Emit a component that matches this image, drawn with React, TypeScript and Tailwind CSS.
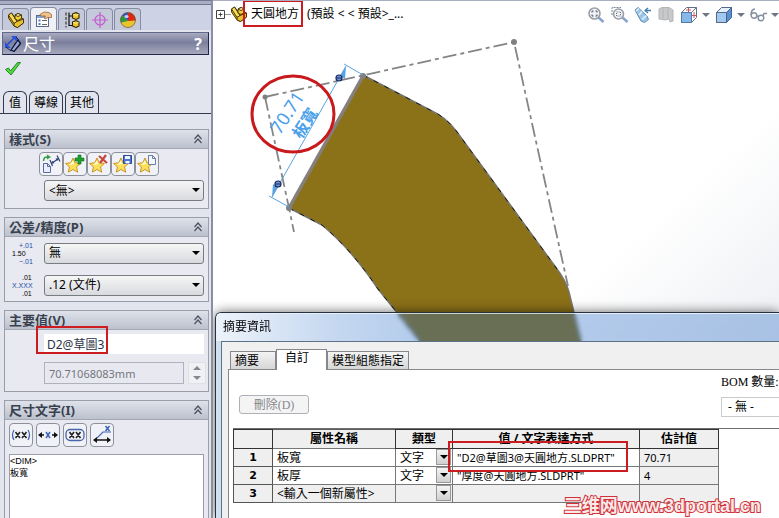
import { ReactNode } from 'react';
import { clsx } from 'clsx';

type Row = {
  id: number;
  name: string;
  type: string;
  value: string;
  result: string;
};

const rows: Row[] = [
  { id: 1, name: '板寬', type: '文字', value: '"D2@草圖3@天圓地方.SLDPRT"', result: '70.71' },
  { id: 2, name: '板厚', type: '文字', value: '"厚度@天圓地方.SLDPRT"', result: '4' },
  { id: 3, name: '<輸入一個新屬性>', type: '', value: '', result: '' },
];

function PartIcon() {
  return (
    <svg className="h-4 w-4 shrink-0" viewBox="0 0 16 16" stroke="#3c2e06" strokeWidth="0.9" strokeLinejoin="round">
      <path d="M0.500 3l3-2 4 5 3-2 5 3v4l-6 4.500-3.500-1.500L0.500 6z" fill="#d9a818" />
      <path d="M0.500 3l3-2 5.500 8.500-3 2z" fill="#f7dc58" />
      <path d="M6 11.500l3-2 6.500-2.500v4l-6 4.500L6 14z" fill="#e9c030" />
      <path d="M7 3l3-1.500L13.500 3v3.500L10 8.500 7 7z" fill="#f2cf3c" />
      <path d="M7 3l3 1.500L13.500 3 10 1.500z" fill="#fff0a0" />
    </svg>
  );
}

function PropertyIcon() {
  return (
    <svg className="h-4 w-4" viewBox="0 0 16 16">
      <rect x="0.500" y="4.500" width="12" height="11" fill="#fff" stroke="#5a6a90" />
      <path d="M1 5h11v2H1z" fill="#8ba3d6" />
      <path d="M2.500 8.500h2v2h-2zM2.500 12h2v2h-2z" fill="#5879b8" />
      <path d="M6 9.500h5M6 13.500h5" stroke="#666" />
      <path d="M4 3.500L8 1l5 .5 2.500 2v3l-3.500 0-3 1.500-1-1 1.500-2-5 0z" fill="#f0c38c" stroke="#8a5a28" strokeWidth="0.7" />
    </svg>
  );
}

function ConfigIcon() {
  return (
    <svg className="h-4 w-4" viewBox="0 0 16 16">
      <path d="M2 0.500v15" stroke="#555" strokeWidth="1.500" strokeDasharray="3 1.500" />
      <path d="M5 0.500v13h4M5 4h4" stroke="#111" strokeWidth="1.200" fill="none" />
      <path d="M8.500 2l3.500-1.500L15 2v4l-3 1.500L8.500 6zM8.500 10L12 8.500 15 10v4l-3 1.500L8.500 14z" fill="#efc42c" stroke="#2e2406" strokeWidth="1.100" />
      <path d="M9 2.500l3 0.800L14.500 2.500M9 10.500l3 0.800 2.500-.8" stroke="#fff09a" strokeWidth="0.900" fill="none" />
    </svg>
  );
}

function TargetIcon() {
  return (
    <svg className="h-4 w-4" viewBox="0 0 16 16" fill="none" stroke="#c35ccf" strokeWidth="1.200">
      <circle cx="8" cy="8" r="5" />
      <path d="M8 0v16M0 8h16" />
    </svg>
  );
}

function AppearanceIcon() {
  return (
    <svg className="h-4 w-4" viewBox="0 0 16 16">
      <circle cx="8" cy="8" r="7.500" fill="#e8c52c" />
      <path d="M8 9L2 3.500A7.500 7.500 0 0 1 8 .5z" fill="#3a54c0" />
      <path d="M8 9V.5a7.500 7.500 0 0 1 7.500 8z" fill="#da2818" />
      <path d="M8 9L2 3.500a7.500 7.500 0 0 0-1 7z" fill="#30963c" />
      <circle cx="8" cy="8" r="7.500" fill="none" stroke="#5a4620" strokeWidth="0.6" />
      <ellipse cx="6.500" cy="4.500" rx="2" ry="1.600" fill="#fff" opacity="0.75" />
    </svg>
  );
}

function DimensionIcon() {
  return (
    <svg className="h-4 w-4 shrink-0" viewBox="0 0 16 16">
      <path d="M6 14l7-10 2.500 3.500L9 15.500z" fill="#9aa6d6" stroke="#0c1238" strokeWidth="1.300" />
      <path d="M2 9l7-7" stroke="#1c48d8" strokeWidth="1.500" />
      <path d="M0 6v6h6zM6 0h6v6z" fill="#2a54dc" />
      <path d="M1 11l5 4M11 1l3 3" stroke="#1a2460" />
    </svg>
  );
}

function CheckMark() {
  return (
    <svg className="h-4 w-4" viewBox="0 0 16 16">
      <path d="M0.500 8.500L3.500 7l2 3 7-8.500 3 0L6 14z" fill="#4fdc3e" stroke="#1a7a1c" strokeWidth="0.9" strokeLinejoin="round" />
    </svg>
  );
}

function Star({ children }: { children?: ReactNode }) {
  return (
    <svg className="h-5 w-5" viewBox="0 0 20 20">
      <path
        d="M8 4l2.200 4.800 5.300.6-4 3.500 1.200 5.300L8 15.500l-4.700 2.700 1.200-5.300-4-3.500 5.300-.6z"
        fill="#fde05a"
        stroke="#c8962a"
        strokeLinejoin="round"
      />
      <path d="M8 6.500l1.200 3.500-5 1z" fill="#fff9d0" />
      {children}
    </svg>
  );
}

const styleButtons = [
  {
    label: '套用預設屬性',
    icon: (
      <svg className="h-5 w-5" viewBox="0 0 20 20" fill="none">
        <path d="M2.500 9.500h4l3 3v6h-7z" fill="#e8eefc" stroke="#5a6a9a" />
        <path d="M6.500 9.500v3h3" stroke="#5a6a9a" />
        <path d="M2.500 7c0-3 2-4.500 4.500-4" stroke="#3a9a44" strokeWidth="1.500" />
        <path d="M6 0.500l4 2.500-4 2.500z" fill="#3a9a44" />
        <path d="M9 6l2.500 6M16 1.500l3 6" stroke="#2a3e78" strokeWidth="1.200" />
        <path d="M11 9l6-4" stroke="#2a3e78" strokeWidth="1.200" />
        <path d="M10 9.500l3.500-.2-1.700-2.600zM18 4.200l-3.500.2 1.700 2.600z" fill="#2a3e78" />
      </svg>
    ),
  },
  {
    label: '加入樣式',
    icon: (
      <Star>
        <path d="M13 1h3v3h3v3h-3v3h-3V7h-3V4h3z" fill="#1ea02c" stroke="#0d681a" strokeWidth="0.6" />
      </Star>
    ),
  },
  {
    label: '刪除樣式',
    icon: (
      <Star>
        <path d="M10 2l8 7M17 1l-6 8" stroke="#c8473c" strokeWidth="2.200" />
      </Star>
    ),
  },
  {
    label: '儲存樣式',
    icon: (
      <Star>
        <path d="M10.500 1.500h8v8h-8z" fill="#4a76d0" stroke="#2a4a98" />
        <path d="M12 2h5v3h-5zM12.500 7h4v2.500h-4z" fill="#f2f6ff" />
      </Star>
    ),
  },
  {
    label: '載入樣式',
    icon: (
      <Star>
        <path d="M11.500 1.500h4l3 3v6h-7z" fill="#f4f7ff" stroke="#6c7ca4" />
        <path d="M15.500 1.500v3h3" fill="none" stroke="#6c7ca4" />
      </Star>
    ),
  },
];

const textButtons = [
  {
    label: '加入括弧',
    icon: (
      <svg className="h-5 w-5" viewBox="0 0 20 20" fill="none">
        <path d="M3 5q-3 5 0 10M17 5q3 5 0 10" stroke="#4766b0" strokeWidth="1.300" />
        <path d="M4.500 7l4.500 6M9 7l-4.500 6M11 7l4.500 6M15.500 7L11 13" stroke="#222" strokeWidth="1.600" />
      </svg>
    ),
  },
  {
    label: '尺寸置中',
    icon: (
      <svg className="h-5 w-5" viewBox="0 0 20 20" fill="none">
        <path d="M1 10h5M14 10h5" stroke="#111" strokeWidth="1.500" />
        <path d="M0 10l4-3v6zM20 10l-4-3v6z" fill="#111" />
        <path d="M8 7l4 6M12 7l-4 6" stroke="#3c64b8" strokeWidth="1.500" />
      </svg>
    ),
  },
  {
    label: '檢查尺寸',
    icon: (
      <svg className="h-5 w-5" viewBox="0 0 20 20" fill="none">
        <rect x="1" y="4.500" width="18" height="11" rx="4" stroke="#4766b0" strokeWidth="1.300" />
        <path d="M4.500 7l4.500 6M9 7l-4.500 6M11 7l4.500 6M15.500 7L11 13" stroke="#222" strokeWidth="1.600" />
      </svg>
    ),
  },
  {
    label: '偏移文字',
    icon: (
      <svg className="h-5 w-5" viewBox="0 0 20 20" fill="none">
        <path d="M5 13l6-6h8" stroke="#3c64b8" strokeWidth="1.100" />
        <path d="M13.500 1l4 5M17.500 1l-4 5" stroke="#3c64b8" strokeWidth="1.500" />
        <path d="M2 15h16" stroke="#111" strokeWidth="1.500" />
        <path d="M1 15l4-3v6zM19 15l-4-3v6z" fill="#111" />
      </svg>
    ),
  },
];

const managerTabs = [
  { label: '特徵樹', icon: <PartIcon /> },
  { label: '屬性', icon: <PropertyIcon /> },
  { label: '模型組態', icon: <ConfigIcon /> },
  { label: '尺寸專家', icon: <TargetIcon /> },
  { label: '外觀', icon: <AppearanceIcon /> },
];

function Arrow({ className }: { className?: string }) {
  return (
    <svg className={clsx('pointer-events-none h-1 w-2', className)} viewBox="0 0 8 4">
      <path d="M0 0h8L4 4z" fill="currentColor" />
    </svg>
  );
}

function Group({ title, className, children }: { title: string; className?: string; children: ReactNode }) {
  return (
    <section className={clsx('border border-[#9a9ea9] bg-[#e8e9f1]', className)}>
      <h2 className="flex h-[19px] items-center justify-between border-b border-[#a3a7b2] bg-linear-to-b from-[#dfe2ea] to-[#bcc1ce] pr-1.5 pl-1 text-[13px] leading-[18px] font-bold text-[#38414e]">
        {title}
        <button aria-label="收合" className="text-[#4a5160]">
          <svg className="h-2.5 w-2" viewBox="0 0 8 10" fill="none" stroke="currentColor" strokeWidth="1.200">
            <path d="M0.500 5L4 1l3.500 4M0.500 9L4 5l3.500 4" />
          </svg>
        </button>
      </h2>
      {children}
    </section>
  );
}

function Combo({ label, value }: { label: string; value: string }) {
  return (
    <div className="relative flex-1">
      <select
        aria-label={label}
        className="block h-[21px] w-full appearance-none rounded-[3px] border border-[#777b82] bg-linear-to-b from-[#f6f6f7] to-[#d9dade] pl-1 text-xs leading-4 text-black"
      >
        <option>{value}</option>
      </select>
      <Arrow className="absolute top-2 right-1" />
    </div>
  );
}

function PropertyPanel() {
  return (
    <aside className="flex w-[213px] shrink-0 flex-col border-r-2 border-[#8a8ea2] bg-[#e3e5ee]">
      <div className="h-[5px] shrink-0 border-y border-[#73778c] bg-[#aaaec4]" />
      <div className="flex h-[25px] shrink-0 items-end gap-px bg-[#cdd2e5] px-0.5">
        {managerTabs.map((tab, i) => (
          <button
            key={tab.label}
            aria-label={tab.label}
            className={clsx(
              'flex w-[27px] items-center justify-center rounded-t-[4px] border border-b-0 border-[#858ba0]',
              i === 1 ? 'h-[23px] bg-[#f0f1f7]' : 'h-[22px] bg-[#c5cadb]'
            )}
          >
            {tab.icon}
          </button>
        ))}
      </div>

      <div className="mx-0.5 mt-0.5 flex h-[23px] shrink-0 items-center gap-0.5 border border-[#62678c] border-r-[#20264e] border-b-[#20264e] bg-linear-to-b from-[#a9abc0] via-[#7b7f9c] via-45% to-[#a6a9bd] px-0.5 text-white">
        <DimensionIcon />
        <h1 className="flex-1 text-base leading-5">尺寸</h1>
        <button aria-label="說明" className="pr-1 text-base leading-5 font-bold">?</button>
      </div>

      <button aria-label="確定" className="mt-1.5 ml-[5px] self-start">
        <CheckMark />
      </button>

      <div className="mt-3.5 flex h-[23px] shrink-0 items-end gap-[2px] border-b border-[#333a50] px-[3px] text-xs leading-4 text-black">
        <button className="h-[22px] rounded-t-md border border-b-0 border-[#333a50] px-[5px]">值</button>
        <button className="h-[22px] rounded-t-md border border-b-0 border-[#333a50] px-1">導線</button>
        <button className="h-[22px] rounded-t-md border border-b-0 border-[#333a50] px-1">其他</button>
      </div>

      <div className="flex min-h-0 flex-1 flex-col gap-2 pt-[15px] pr-0.5 pl-1">
        <Group title="樣式(S)">
          <div className="flex flex-col gap-1 pt-[3px] pr-1 pb-[7px] pl-[34px]">
            <div className="flex">
              {styleButtons.map((b) => (
                <button
                  key={b.label}
                  aria-label={b.label}
                  className="flex h-6 w-6 items-center justify-center rounded-[4px] border border-[#8d919c] bg-[#f1f2f7]"
                >
                  {b.icon}
                </button>
              ))}
            </div>
            <div className="flex pl-[5px]">
              <Combo label="樣式" value="<無>" />
            </div>
          </div>
        </Group>

        <Group title="公差/精度(P)">
          <div className="flex flex-col gap-2 py-1 pr-1 pl-1.5">
            <div className="flex items-center">
              <svg className="h-6 w-[33px] shrink-0 font-['Liberation_Sans'] text-[7px]" viewBox="0 0 33 24">
                <text x="8" y="7" fill="#2452a4">+.01</text>
                <text x="1" y="15">1.50</text>
                <text x="8" y="23" fill="#2452a4">−.01</text>
              </svg>
              <Combo label="公差類型" value="無" />
            </div>
            <div className="flex items-center">
              <svg className="h-6 w-[33px] shrink-0 font-['Liberation_Sans'] text-[7px]" viewBox="0 0 33 24">
                <text x="11" y="7">.01</text>
                <text x="1" y="15" fill="#2452a4">X.XXX</text>
                <text x="11" y="23">.01</text>
              </svg>
              <Combo label="單位精度" value=".12 (文件)" />
            </div>
          </div>
        </Group>

        <Group title="主要值(V)">
          <div className="flex flex-col gap-2 pt-1 pr-1 pb-[7px] pl-[39px]">
            <div className="relative">
              <input
                aria-label="名稱"
                defaultValue="D2@草圖3"
                className="block h-5 w-full bg-white pl-[3px] text-xs leading-4 text-[#2a3348]"
              />
              <div className="pointer-events-none absolute -top-2 -left-2 h-7 w-[72px] border-2 border-[#cc1c20]" />
            </div>
            <div className="flex items-center gap-1">
              <input
                aria-label="尺寸值"
                disabled
                defaultValue="70.71068083mm"
                className="h-[22px] w-[140px] border border-[#b0b2bb] bg-[#e8e9f0] pl-1 text-[11px] leading-4 text-[#74767d]"
              />
              <div className="flex flex-col border border-[#e0e1e6] bg-[#f1f1f5] text-[#85878f]">
                <button aria-label="增加" className="flex h-2.5 w-4 items-center justify-center">
                  <Arrow className="rotate-180" />
                </button>
                <button aria-label="減少" className="flex h-2.5 w-4 items-center justify-center">
                  <Arrow />
                </button>
              </div>
            </div>
          </div>
        </Group>

        <Group title="尺寸文字(I)" className="flex flex-1 flex-col border-b-0">
          <div className="flex gap-[3px] px-1 pt-[3px] pb-[7px]">
            {textButtons.map((b) => (
              <button
                key={b.label}
                aria-label={b.label}
                className="flex h-6 w-6 items-center justify-center rounded-[4px] border border-[#8d919c] bg-[#f1f2f7]"
              >
                {b.icon}
              </button>
            ))}
          </div>
          <textarea
            aria-label="尺寸文字"
            defaultValue={'<DIM>\n板寬'}
            className="mr-1 ml-1 block min-h-0 flex-1 resize-none border border-b-0 border-[#9b9ea8] bg-white font-['Liberation_Sans','Noto_Sans_CJK_TC',sans-serif] text-[9px] leading-3 text-black"
          />
        </Group>
      </div>
    </aside>
  );
}

function HeadsUpToolbar() {
  return (
    <div className="flex items-center gap-[5px] text-[#707682]">
      <button aria-label="最適當大小">
        <svg className="h-4 w-[18px]" viewBox="0 0 18 16" fill="none">
          <circle cx="6.500" cy="6.500" r="5.500" fill="#f2f4f8" stroke="#9a9ea6" strokeWidth="1.600" />
          <path d="M4 5.500V4h1.500M7.500 4H9v1.500M9 7.500V9H7.500M5.500 9H4V7.500" stroke="#4a505c" />
          <path d="M10.500 10.500l5 4.500" stroke="#86a4cc" strokeWidth="2.500" />
        </svg>
      </button>
      <button aria-label="局部放大">
        <svg className="h-4 w-[18px]" viewBox="0 0 18 16" fill="none">
          <path d="M1 8V0.500h9" stroke="#7a808c" strokeDasharray="2 1" />
          <circle cx="7.500" cy="7" r="5" fill="#f2f4f8" stroke="#9a9ea6" strokeWidth="1.600" />
          <path d="M5.500 5h4v4h-4z" stroke="#6a707c" strokeDasharray="1 1" />
          <path d="M11.500 10.500l5 4.500" stroke="#86a4cc" strokeWidth="2.500" />
        </svg>
      </button>
      <button aria-label="前次視角">
        <svg className="h-4 w-[18px]" viewBox="0 0 18 16" fill="none" strokeLinejoin="round">
          <path d="M1 3l3-2.500 9 8.500 1.500 3.500-4 3-3.500-1.500z" fill="#9cc6e8" stroke="#5a8cb4" />
          <path d="M2 4l3-2.500M5 8l3-3.500M8 12.500l4.500-4" stroke="#e8f4fc" strokeWidth="1.300" />
          <path d="M11 3.500h6M14 1l-3 2.500L14 6" stroke="#457eae" strokeWidth="1.400" />
        </svg>
      </button>
      <button aria-label="剖面視角">
        <svg className="h-4 w-[18px]" viewBox="0 0 18 16">
          <path d="M2 2l3-1.500h7L16 3v11l-3 1-1-3-4 1-6-1z" fill="#c8c9cb" stroke="#b4b5b8" />
          <path d="M6 1v11M11 1v11" stroke="#b4b5b8" />
        </svg>
      </button>
      <button aria-label="視角方位" className="flex items-center gap-1">
        <svg className="h-4 w-[18px]" viewBox="0 0 18 16" strokeLinejoin="round">
          <path d="M1.500 5.500l5-5h10v10l-5 5h-10z" fill="#fff" stroke="#5f7186" />
          <path d="M1.500 5.500h10v10h-10z" fill="#86b8ea" stroke="#4f78a6" />
          <path d="M11.500 5.500l5-5" stroke="#5f7186" />
          <path d="M8.500 1v4M6 3h5M14 5v6M12 8.500h4" stroke="#cf5562" />
        </svg>
        <Arrow className="w-1.5" />
      </button>
      <button aria-label="顯示樣式" className="flex items-center gap-1">
        <svg className="h-4 w-[18px]" viewBox="0 0 18 16" strokeLinejoin="round">
          <path d="M1.500 5.500l5-5h10v10l-5 5h-10z" fill="#e4effb" stroke="#526a88" />
          <path d="M1.500 5.500h10v10h-10z" fill="#a2c8f0" stroke="#526a88" />
          <path d="M11.500 5.500l5-5v10l-5 5z" fill="#5a90d0" stroke="#41658f" />
        </svg>
        <Arrow className="w-1.5" />
      </button>
      <button aria-label="隱藏/顯示項目" className="flex items-center gap-1">
        <svg className="h-4 w-[17px]" viewBox="0 0 17 16" fill="none" stroke="#8490a0" strokeWidth="1.400">
          <circle cx="4" cy="8.500" r="2.800" />
          <circle cx="11" cy="11" r="2.800" />
          <path d="M1 8c0-4 2-6 4-6M7 9l2 .5M13 9l1-2.500 3 0" />
        </svg>
        <Arrow className="w-1.5" />
      </button>
    </div>
  );
}

function Sketch() {
  return (
    <svg className="absolute top-0 left-0 h-[518px] w-[566px]" viewBox="213 1 566 518" fill="none">
      <path
        d="M363 75L430 110Q446 117 457 132L557 269Q566 281 569 292L581 341L590 380H448L420 341L378 289Q352 250 322 225L289 208z"
        fill="#8b7118"
      />
      <path
        d="M363 75L430 110Q446 117 457 132L557 269Q566 281 569 292L581 341M289 208L322 225Q352 250 378 289L420 341"
        stroke="#77756d"
        strokeWidth="1.500"
      />
      <path
        d="M363 75L430 110Q446 117 457 132L557 269M289 208L322 225Q352 250 378 289L420 341"
        stroke="#17150e"
        strokeDasharray="5 7"
      />
      <path d="M265 97L514 42L568 286M265 97L289 208L294 232" stroke="#858585" strokeWidth="1.800" strokeDasharray="14 4 4 4" />
      <path d="M363 76L289 208" stroke="#85807e" strokeWidth="3.500" />
      <circle cx="265" cy="97" r="2.500" fill="#808080" />
      <circle cx="514" cy="42" r="3" fill="#808080" />
      <circle cx="363" cy="76" r="3" fill="#808080" />
      <circle cx="289" cy="208" r="3" fill="#808080" />
      <path d="M346 66L272 197M344 64l19 11M269 196l20 11" stroke="#5aa2e4" />
      <path d="M346 66l-1 13-5-3zM272 197l1-13 5 3z" fill="#5aa2e4" />
      <circle cx="339" cy="78" r="3" fill="#6f93d8" stroke="#17275c" strokeWidth="1.200" />
      <circle cx="278" cy="184" r="3" fill="#6f93d8" stroke="#17275c" strokeWidth="1.200" />
      <path d="M337 78h4M276 184h4" stroke="#17275c" />
      <g fill="#4ba0ea" transform="rotate(-57 292 117)">
        <text x="270" y="117" fontSize="18">70.71</text>
        <text x="278" y="137" fontSize="16" fontWeight="700">板寬</text>
      </g>
      <ellipse cx="293" cy="114" rx="41" ry="38" stroke="#c8191c" strokeWidth="3" />
    </svg>
  );
}

function SummaryDialog() {
  return (
    <div
      role="dialog"
      aria-label="摘要資訊"
      className="absolute top-[311px] right-0 bottom-0 left-0.5 flex flex-col rounded-tl-md border-t border-l border-[#26323f] shadow-[0_0_12px_rgba(0,0,0,0.6)]"
    >
      <div className="h-7 shrink-0 rounded-tl-md border-t border-l border-white/70 bg-[#276ec8]/35 backdrop-blur-[2px]">
        <h2 className="h-full bg-linear-to-r from-white/75 from-0% via-white/25 via-[20%] to-transparent to-[35%] pl-1.5 text-xs leading-[26px] text-black">
          摘要資訊
        </h2>
      </div>
      <div className="flex min-h-0 flex-1 border-l-[5px] border-[#cfe0f2]">
        <div className="flex min-w-0 flex-1 flex-col border-t border-l border-[#5f7285] bg-[#f0f0f0] pt-[7px] pl-1.5">
          <div role="tablist" className="relative z-10 -mb-px flex h-[21px] shrink-0 items-end pl-0.5 text-xs leading-4 text-black">
            <button role="tab" className="h-[19px] w-[46px] border border-[#85878c] bg-linear-to-b from-[#f4f4f4] to-[#d6d6d6] pl-1 text-left">
              摘要
            </button>
            <button role="tab" aria-selected="true" className="h-[21px] w-[51px] border border-b-0 border-[#85878c] bg-white pb-1 pl-2 text-left">
              自訂
            </button>
            <button role="tab" className="h-[19px] border border-[#85878c] bg-linear-to-b from-[#f4f4f4] to-[#d6d6d6] px-1">
              模型組態指定
            </button>
          </div>

          <div className="relative flex-1 border-t border-l border-[#85878c] bg-white pl-1">
            <div className="flex h-[58px] items-start justify-between">
              <button disabled className="mt-[25px] ml-1.5 h-[19px] w-[70px] rounded-[3px] border border-[#aeb1b5] bg-[#f4f4f4] font-['Liberation_Serif','Noto_Sans_CJK_TC',serif] text-xs leading-4 text-[#85878b]">
                刪除(D)
              </button>
              <div className="flex w-[58px] flex-col pt-[3px]">
                <label htmlFor="bom" className="font-['Liberation_Serif','Noto_Sans_CJK_TC',serif] text-xs leading-[18px] whitespace-nowrap text-black">
                  BOM 數量:
                </label>
                <select id="bom" className="mt-1.5 h-5 appearance-none border border-r-0 border-[#c8cacd] bg-white pl-1.5 text-xs leading-4">
                  <option>- 無 -</option>
                </select>
              </div>
            </div>

            <div className="border-t border-[#6f6f6f]">
              <table className="w-[485px] table-fixed border-collapse border border-[#5c5c5c] text-xs leading-4 text-black">
                <colgroup>
                  <col className="w-[39px]" />
                  <col className="w-[123px]" />
                  <col className="w-[57px]" />
                  <col className="w-[187px]" />
                  <col className="w-[79px]" />
                </colgroup>
                <thead>
                  <tr className="h-[19px] bg-[#efefef]">
                    <th className="border border-[#333] p-0" />
                    <th className="border border-dotted border-[#333] p-0 font-bold">屬性名稱</th>
                    <th className="border border-[#333] p-0 font-bold">類型</th>
                    <th className="border border-[#333] p-0 font-bold">值 / 文字表達方式</th>
                    <th className="border border-[#333] p-0 font-bold">估計值</th>
                  </tr>
                </thead>
                <tbody>
                  {rows.map((row) => (
                    <tr key={row.id} className={clsx('h-[18px]', row.id === 3 ? 'bg-[#efefef]' : 'bg-white')}>
                      <th className="border border-[#555] bg-[#efefef] p-0 font-['DejaVu_Sans',sans-serif] text-[11px] font-bold">{row.id}</th>
                      <td className="border border-[#777] p-0 pl-1">{row.name}</td>
                      <td className="border border-[#777] p-0">
                        <div className="relative">
                          <select aria-label={`類型 ${row.id}`} className="block h-[17px] w-full appearance-none pl-1 leading-4">
                            <option>{row.type}</option>
                          </select>
                          <span className="pointer-events-none absolute top-0 right-px flex h-4 w-[15px] items-center justify-center border border-[#999] bg-linear-to-b from-[#f5f5f5] to-[#cfcfcf]">
                            <Arrow />
                          </span>
                        </div>
                      </td>
                      <td className="border border-[#777] p-0 pl-1 text-[11px] whitespace-nowrap">{row.value}</td>
                      <td className="border border-[#777] bg-[#efefef] p-0 pl-1 text-[11px]">{row.result}</td>
                    </tr>
                  ))}
                </tbody>
              </table>
            </div>
            <div className="pointer-events-none absolute top-[71px] left-[219px] h-[31px] w-[180px] border-2 border-[#cc1c20]" />
          </div>
        </div>
      </div>
    </div>
  );
}

export default function App() {
  return (
    <div className="flex h-screen overflow-hidden bg-white font-['Noto_Sans','Noto_Sans_CJK_TC',sans-serif]">
      <PropertyPanel />
      <main className="relative min-w-0 flex-1 overflow-hidden border-t border-[#a9adc0] bg-linear-to-br from-white from-60% to-[#dfe3ea]">
        <Sketch />
        <div className="relative flex items-start justify-between">
          <div className="flex h-[26px] items-center text-xs leading-4 whitespace-nowrap text-black">
            <button aria-label="展開" className="ml-[3px]">
              <svg className="h-[9px] w-[15px]" viewBox="0 0 15 9" fill="none" stroke="#444">
                <path d="M0.500 0.500h8v8h-8zM2.500 4.500h4M4.500 2.500v4" />
                <path d="M9 4.500h6" stroke="#999" />
              </svg>
            </button>
            <PartIcon />
            <span className="-mt-px -ml-1 flex h-[27px] items-center border-2 border-[#cc1c20] pr-0.5 pl-1.5">天圓地方</span>
            <span className="pl-1">(預設 &lt; &lt; 預設&gt;_...</span>
          </div>
          <div className="pt-1.5">
            <HeadsUpToolbar />
          </div>
        </div>
        <SummaryDialog />
        <div className="absolute right-[18px] bottom-0.5 font-['Liberation_Sans','Noto_Sans_CJK_SC',sans-serif] text-lg leading-5 font-bold text-[#fbe9e9] [-webkit-text-stroke:2px_#cf3238] [paint-order:stroke_fill]">
          三维网www.3dportal.cn
        </div>
      </main>
    </div>
  );
}
